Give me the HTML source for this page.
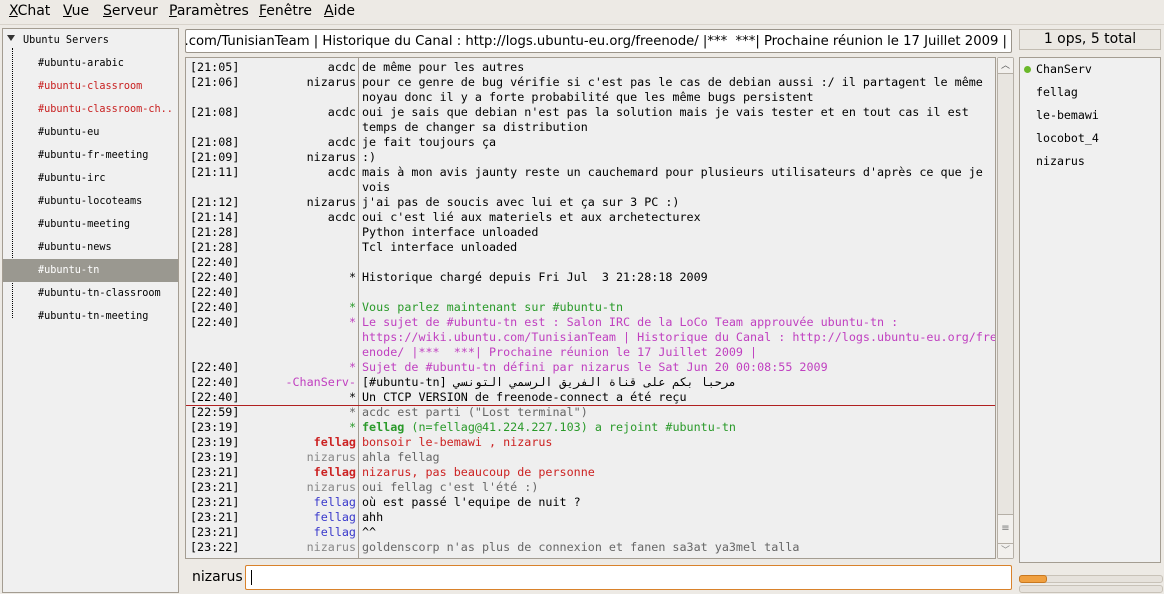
<!DOCTYPE html>
<html><head><meta charset="utf-8"><style>
*{margin:0;padding:0;box-sizing:border-box}
body{width:1164px;height:594px;background:#edeae5;font-family:"DejaVu Sans","Liberation Sans",sans-serif;position:relative;overflow:hidden;color:#000}
.abs{position:absolute}
.menu{top:0;left:0;width:1164px;height:24px;font-size:14px}
.menu span{position:absolute;top:3px}
.menu u{text-decoration:underline}
.tree{left:2px;top:28px;width:177px;height:565px;background:#f0f0f0;border:1px solid #a49d92}
.tree .it{position:absolute;left:35px;font:10.2px "DejaVu Sans Mono",monospace;height:23px;line-height:23px}
.mono{font-family:"DejaVu Sans Mono","Liberation Mono",monospace;font-size:11.72px}
.chat{left:185px;top:57px;width:811px;height:502px;background:#efefef;border:1px solid #a49d92;overflow:hidden}
.ln{position:absolute;height:15px;line-height:15px;white-space:pre;left:0;width:810px}
.ln .t{position:absolute;left:4px}
.ln .n{position:absolute;right:640px;text-align:right}
.ln .m{position:absolute;left:176px}
.g{color:#2a9a2a}.p{color:#c040c0}.r{color:#cc2222}.gr{color:#666}.gn{color:#888}.b{color:#3a3acc}
.sb{left:997px;top:57px;width:17px;height:502px;background:#e8e5e0;border:1px solid #b5afa6;border-radius:2px}
.ul{left:1019px;top:57px;width:142px;height:506px;background:#f0f0f0;border:1px solid #a49d92}
.ul .u{position:absolute;left:16px;font:11.6px "DejaVu Sans Mono",monospace}
</style></head><body>
<div class="abs menu">
<span style="left:9px"><u>X</u>Chat</span>
<span style="left:63px"><u>V</u>ue</span>
<span style="left:103px"><u>S</u>erveur</span>
<span style="left:169px"><u>P</u>aramètres</span>
<span style="left:259px"><u>F</u>enêtre</span>
<span style="left:324px"><u>A</u>ide</span>
</div>
<div class="abs" style="left:0;top:24px;width:1164px;height:1px;background:#d8d3cb"></div>

<div class="abs tree">
<div style="position:absolute;left:4px;top:6px;width:0;height:0;border-left:4px solid transparent;border-right:4px solid transparent;border-top:6px solid #333"></div>
<div class="it" style="left:20px;top:0">Ubuntu Servers</div>
<div style="position:absolute;left:9px;top:19px;height:270px;border-left:1px dotted #000"></div>
<div class="abs" style="left:0;top:230px;width:175px;height:23px;background:#9a9890"></div>
<div class="it" style="top:23px">#ubuntu-arabic</div>
<div class="it" style="top:46px;color:#c82020">#ubuntu-classroom</div>
<div class="it" style="top:69px;color:#c82020">#ubuntu-classroom-ch..</div>
<div class="it" style="top:92px">#ubuntu-eu</div>
<div class="it" style="top:115px">#ubuntu-fr-meeting</div>
<div class="it" style="top:138px">#ubuntu-irc</div>
<div class="it" style="top:161px">#ubuntu-locoteams</div>
<div class="it" style="top:184px">#ubuntu-meeting</div>
<div class="it" style="top:207px">#ubuntu-news</div>
<div class="it" style="top:230px;color:#fff">#ubuntu-tn</div>
<div class="it" style="top:253px">#ubuntu-tn-classroom</div>
<div class="it" style="top:276px">#ubuntu-tn-meeting</div>
</div>

<div class="abs" style="left:185px;top:29px;width:827px;height:24px;background:#fff;border:1px solid #9a948a;border-radius:2px;overflow:hidden;display:flex;justify-content:flex-end;align-items:center;white-space:nowrap;font-size:13.2px;padding-right:4px;font-family:'DejaVu Sans',sans-serif">http://wiki.ubuntu.com/TunisianTeam | Historique du Canal : http://logs.ubuntu-eu.org/freenode/ |***&nbsp; ***| Prochaine réunion le 17 Juillet 2009 |</div>

<div class="abs" style="left:1019px;top:29px;width:142px;height:21px;background:#ebe8e3;border:1px solid #c2bcb2;font-size:14px;text-align:center;line-height:19px">1 ops, 5 total</div>

<div class="abs chat mono">
<div class="abs" style="left:172px;top:0;width:1px;height:500px;background:#a49d92"></div>
<div class="abs" style="left:0;top:347px;width:810px;height:1px;background:#b02020"></div>
<div class="ln" style="top:2px"><span class="t">[21:05]</span><span class="n">acdc</span><span class="m">de même pour les autres</span></div>
<div class="ln" style="top:17px"><span class="t">[21:06]</span><span class="n">nizarus</span><span class="m">pour ce genre de bug vérifie si c'est pas le cas de debian aussi :/ il partagent le même</span></div>
<div class="ln" style="top:32px"><span class="m">noyau donc il y a forte probabilité que les même bugs persistent</span></div>
<div class="ln" style="top:47px"><span class="t">[21:08]</span><span class="n">acdc</span><span class="m">oui je sais que debian n'est pas la solution mais je vais tester et en tout cas il est</span></div>
<div class="ln" style="top:62px"><span class="m">temps de changer sa distribution</span></div>
<div class="ln" style="top:77px"><span class="t">[21:08]</span><span class="n">acdc</span><span class="m">je fait toujours ça</span></div>
<div class="ln" style="top:92px"><span class="t">[21:09]</span><span class="n">nizarus</span><span class="m">:)</span></div>
<div class="ln" style="top:107px"><span class="t">[21:11]</span><span class="n">acdc</span><span class="m">mais à mon avis jaunty reste un cauchemard pour plusieurs utilisateurs d'après ce que je</span></div>
<div class="ln" style="top:122px"><span class="m">vois</span></div>
<div class="ln" style="top:137px"><span class="t">[21:12]</span><span class="n">nizarus</span><span class="m">j'ai pas de soucis avec lui et ça sur 3 PC :)</span></div>
<div class="ln" style="top:152px"><span class="t">[21:14]</span><span class="n">acdc</span><span class="m">oui c'est lié aux materiels et aux archetecturex</span></div>
<div class="ln" style="top:167px"><span class="t">[21:28]</span><span class="m">Python interface unloaded</span></div>
<div class="ln" style="top:182px"><span class="t">[21:28]</span><span class="m">Tcl interface unloaded</span></div>
<div class="ln" style="top:197px"><span class="t">[22:40]</span></div>
<div class="ln" style="top:212px"><span class="t">[22:40]</span><span class="n">*</span><span class="m">Historique chargé depuis Fri Jul  3 21:28:18 2009</span></div>
<div class="ln" style="top:227px"><span class="t">[22:40]</span></div>
<div class="ln" style="top:242px"><span class="t">[22:40]</span><span class="n g">*</span><span class="m g">Vous parlez maintenant sur #ubuntu-tn</span></div>
<div class="ln" style="top:257px"><span class="t">[22:40]</span><span class="n p">*</span><span class="m p">Le sujet de #ubuntu-tn est : Salon IRC de la LoCo Team approuvée ubuntu-tn :</span></div>
<div class="ln" style="top:272px"><span class="m p">https://wiki.ubuntu.com/TunisianTeam | Historique du Canal : http://logs.ubuntu-eu.org/fre</span></div>
<div class="ln" style="top:287px"><span class="m p">enode/ |***  ***| Prochaine réunion le 17 Juillet 2009 |</span></div>
<div class="ln" style="top:302px"><span class="t">[22:40]</span><span class="n p">*</span><span class="m p">Sujet de #ubuntu-tn défini par nizarus le Sat Jun 20 00:08:55 2009</span></div>
<div class="ln" style="top:317px"><span class="t">[22:40]</span><span class="n p">-ChanServ-</span><span class="m">[#ubuntu-tn] <span dir="rtl">مرحبا بكم على قناة الفريق الرسمي التونسي</span></span></div>
<div class="ln" style="top:332px"><span class="t">[22:40]</span><span class="n">*</span><span class="m">Un CTCP VERSION de freenode-connect a été reçu</span></div>
<div class="ln" style="top:347px"><span class="t">[22:59]</span><span class="n gr">*</span><span class="m gr">acdc est parti ("Lost terminal")</span></div>
<div class="ln" style="top:362px"><span class="t">[23:19]</span><span class="n g">*</span><span class="m g"><b>fellag</b> (n=fellag@41.224.227.103) a rejoint #ubuntu-tn</span></div>
<div class="ln" style="top:377px"><span class="t">[23:19]</span><span class="n r"><b>fellag</b></span><span class="m r">bonsoir le-bemawi , nizarus</span></div>
<div class="ln" style="top:392px"><span class="t">[23:19]</span><span class="n gn">nizarus</span><span class="m gr">ahla fellag</span></div>
<div class="ln" style="top:407px"><span class="t">[23:21]</span><span class="n r"><b>fellag</b></span><span class="m r">nizarus, pas beaucoup de personne</span></div>
<div class="ln" style="top:422px"><span class="t">[23:21]</span><span class="n gn">nizarus</span><span class="m gr">oui fellag c'est l'été :)</span></div>
<div class="ln" style="top:437px"><span class="t">[23:21]</span><span class="n b">fellag</span><span class="m">où est passé l'equipe de nuit ?</span></div>
<div class="ln" style="top:452px"><span class="t">[23:21]</span><span class="n b">fellag</span><span class="m">ahh</span></div>
<div class="ln" style="top:467px"><span class="t">[23:21]</span><span class="n b">fellag</span><span class="m">^^</span></div>
<div class="ln" style="top:482px"><span class="t">[23:22]</span><span class="n gn">nizarus</span><span class="m gr">goldenscorp n'as plus de connexion et fanen sa3at ya3mel talla</span></div>
</div>

<div class="abs sb">
<div class="abs" style="left:0;top:0;width:15px;height:16px;background:#f2f0ed;border-bottom:1px solid #b5afa6;text-align:center;font-size:9px;color:#555;line-height:16px">︿</div>
<div class="abs" style="left:0;top:456px;width:15px;height:30px;background:#f2f0ed;border:1px solid #b5afa6;border-left:0;border-right:0;text-align:center;font-size:10px;color:#777;line-height:28px">≡</div>
<div class="abs" style="left:0;top:486px;width:15px;height:14px;background:#f2f0ed;text-align:center;font-size:9px;color:#888;line-height:14px">﹀</div>
</div>

<div class="abs ul">
<div class="abs" style="left:4px;top:8px;width:7px;height:7px;border-radius:50%;background:#6ab82a"></div>
<div class="u" style="top:4px">ChanServ</div>
<div class="u" style="top:27px">fellag</div>
<div class="u" style="top:50px">le-bemawi</div>
<div class="u" style="top:73px">locobot_4</div>
<div class="u" style="top:96px">nizarus</div>
</div>

<div class="abs" style="left:192px;top:569px;font-size:14px">nizarus</div>
<div class="abs" style="left:245px;top:565px;width:767px;height:25px;background:#fff;border:1.5px solid #d9822b;border-radius:2px"><div style="position:absolute;left:5px;top:4px;width:1px;height:15px;background:#000"></div></div>

<div class="abs" style="left:1019px;top:575px;width:144px;height:8px;background:#e6e2dc;border:1px solid #c8c2b8;border-radius:3px"></div>
<div class="abs" style="left:1019px;top:575px;width:28px;height:8px;background:#f0a040;border:1px solid #c87820;border-radius:3px"></div>
<div class="abs" style="left:1019px;top:585px;width:144px;height:8px;background:#e6e2dc;border:1px solid #c8c2b8;border-radius:3px"></div>
</body></html>
